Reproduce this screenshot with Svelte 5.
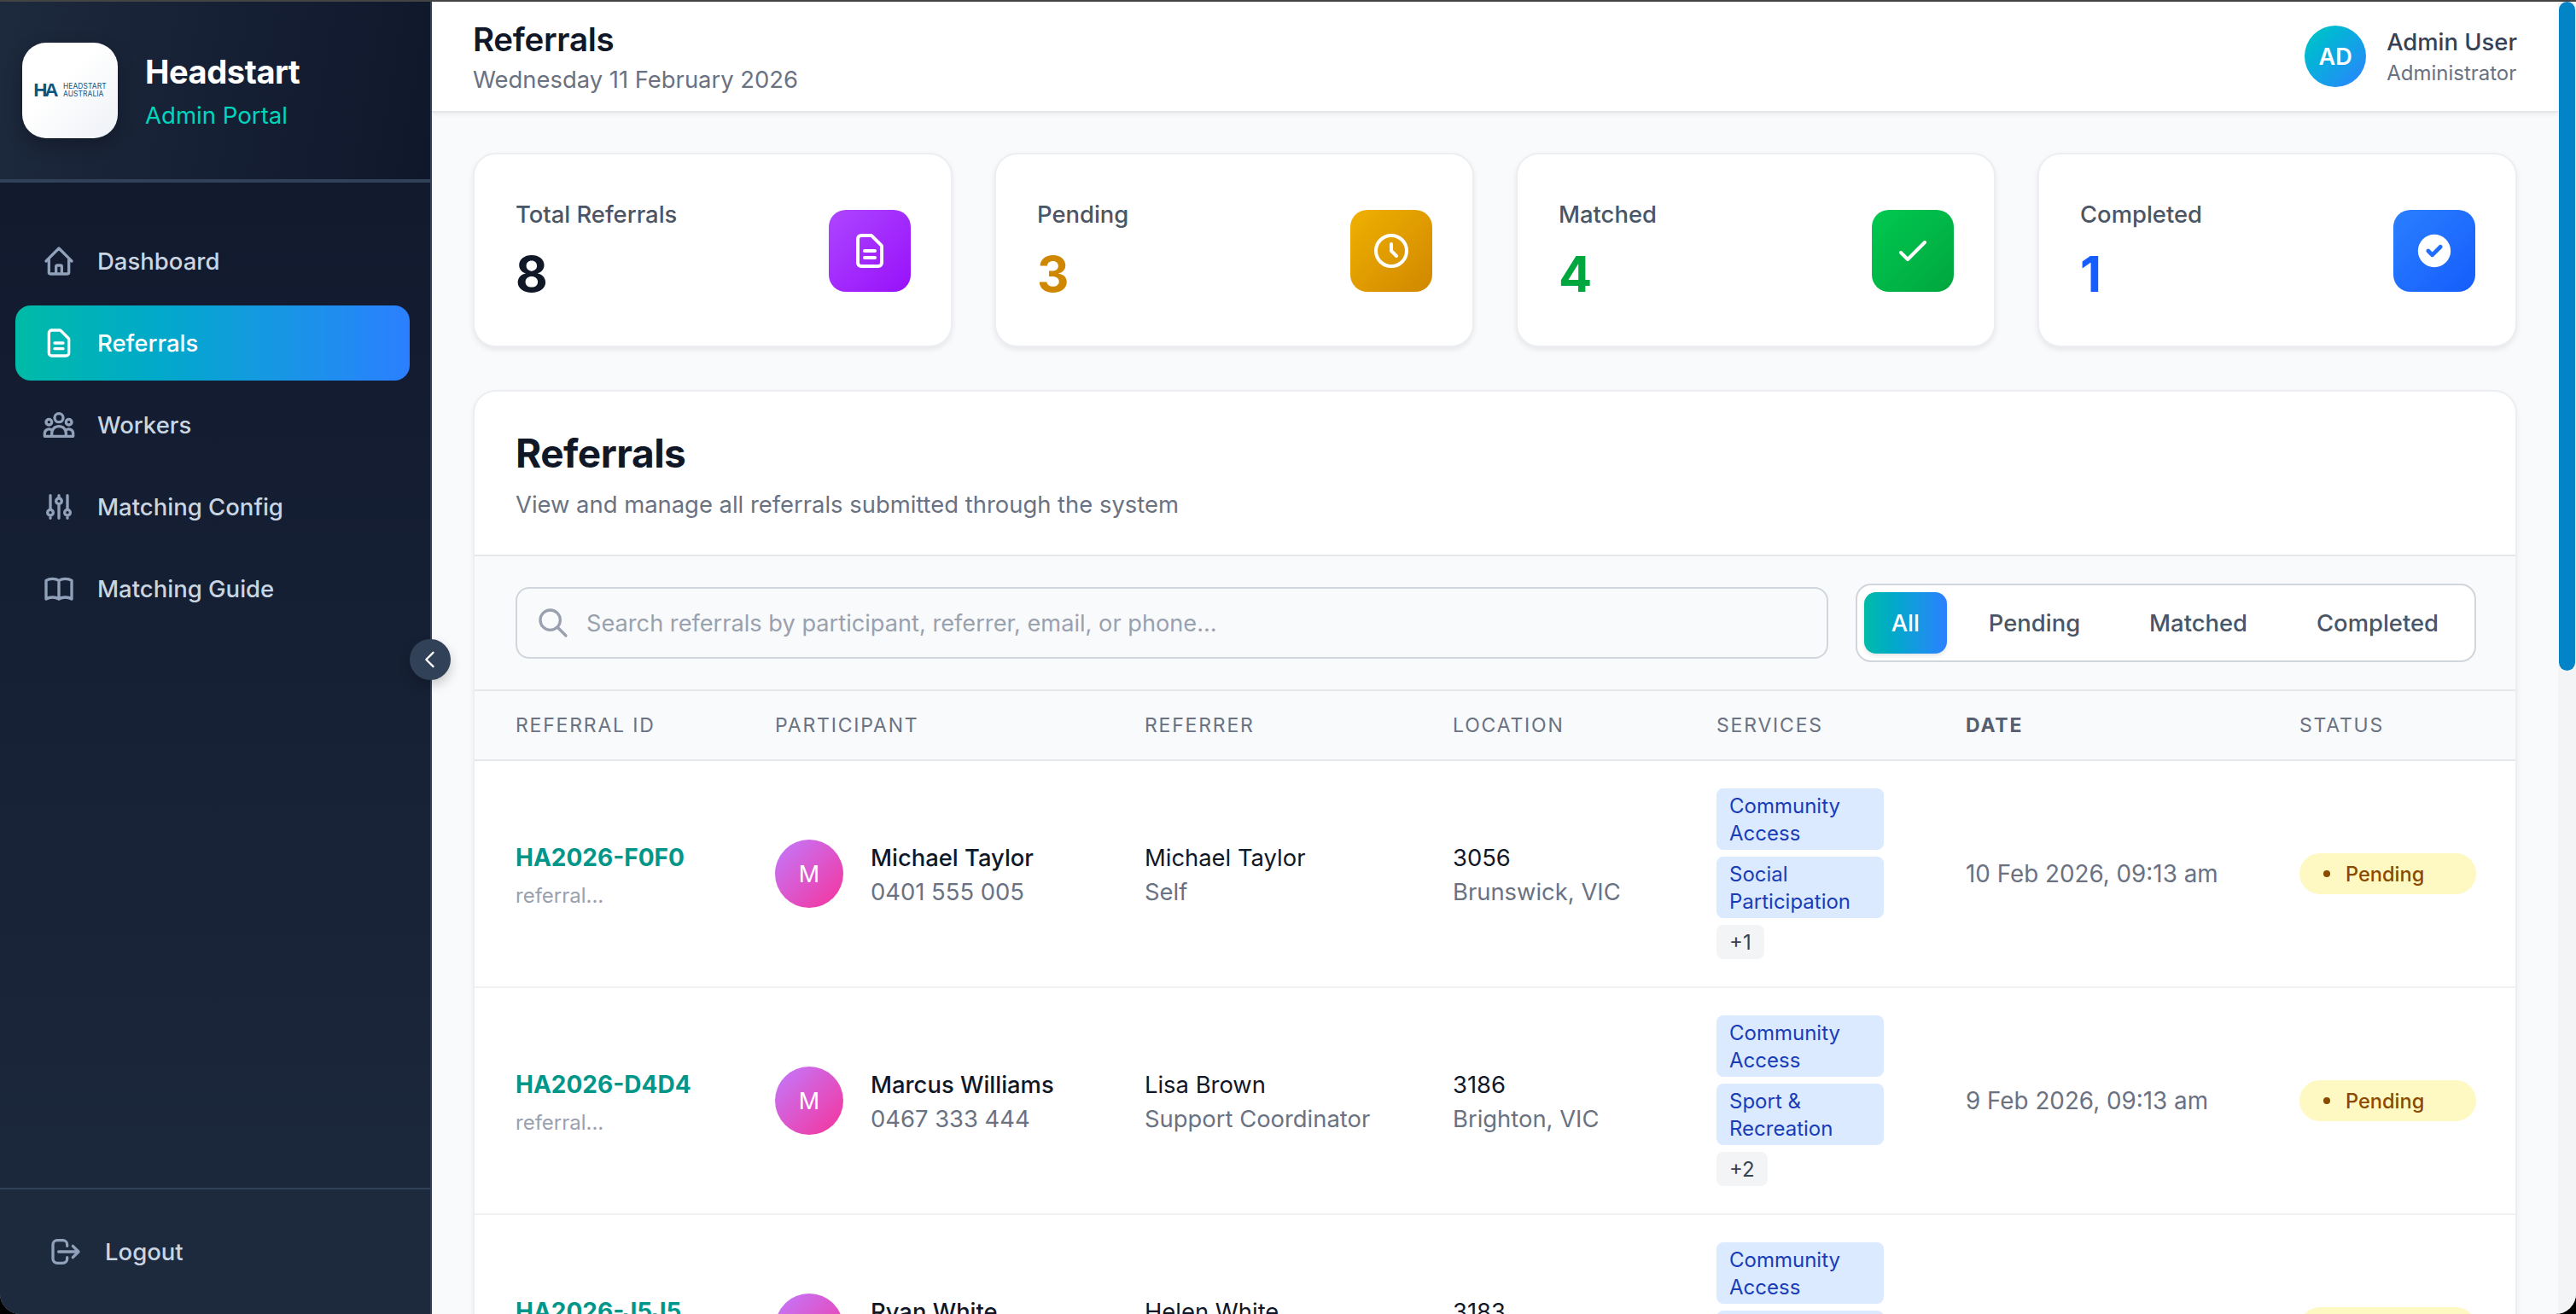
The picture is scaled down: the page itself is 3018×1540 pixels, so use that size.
<script lang="ts">
	interface Referral {
		id: string;
		name: string;
		phone: string;
		referrer: string;
		relation: string;
		postcode: string;
		suburb: string;
		services: string[];
		extra: number;
		date: string;
	}

	const icons: Record<string, string> = {
		home: 'M3 12l2-2m0 0l7-7 7 7M5 10v10a1 1 0 001 1h3m10-11l2 2m-2-2v10a1 1 0 01-1 1h-3m-6 0a1 1 0 001-1v-4a1 1 0 011-1h2a1 1 0 011 1v4a1 1 0 001 1m-6 0h6',
		doc: 'M9 12h6m-6 4h6m2 5H7a2 2 0 01-2-2V5a2 2 0 012-2h5.586a1 1 0 01.707.293l5.414 5.414a1 1 0 01.293.707V19a2 2 0 01-2 2z',
		group: 'M17 20h5v-2a3 3 0 00-5.356-1.857M17 20H7m10 0v-2c0-.656-.126-1.283-.356-1.857M7 20H2v-2a3 3 0 015.356-1.857M7 20v-2c0-.656.126-1.283.356-1.857m0 0a5.002 5.002 0 019.288 0M15 7a3 3 0 11-6 0 3 3 0 016 0zm6 3a2 2 0 11-4 0 2 2 0 014 0zM7 10a2 2 0 11-4 0 2 2 0 014 0z',
		sliders: 'M12 6V4m0 2a2 2 0 100 4m0-4a2 2 0 110 4m-6 8a2 2 0 100-4m0 4a2 2 0 110-4m0 4v2m0-6V4m6 6v10m6-2a2 2 0 100-4m0 4a2 2 0 110-4m0 4v2m0-6V4',
		book: 'M12 6.253v13m0-13C10.832 5.477 9.246 5 7.5 5S4.168 5.477 3 6.253v13C4.168 18.477 5.754 18 7.5 18s3.332.477 4.5 1.253m0-13C13.168 5.477 14.754 5 16.5 5c1.747 0 3.332.477 4.5 1.253v13C19.832 18.477 18.247 18 16.5 18c-1.746 0-3.332.477-4.5 1.253',
		logout: 'M17 16l4-4m0 0l-4-4m4 4H7m6 4v1a3 3 0 01-3 3H6a3 3 0 01-3-3V7a3 3 0 013-3h4a3 3 0 013 3v1',
		clock: 'M12 8v4l3 3m6-3a9 9 0 11-18 0 9 9 0 0118 0z',
		check: 'M5 13l4 4L19 7'
	};

	const navItems = [
		{ label: 'Dashboard', icon: 'home' },
		{ label: 'Referrals', icon: 'doc', active: true },
		{ label: 'Workers', icon: 'group' },
		{ label: 'Matching Config', icon: 'sliders' },
		{ label: 'Matching Guide', icon: 'book' }
	];

	const stats = [
		{ label: 'Total Referrals', value: 8, tone: 'purple', icon: 'doc' },
		{ label: 'Pending', value: 3, tone: 'yellow', icon: 'clock' },
		{ label: 'Matched', value: 4, tone: 'green', icon: 'check' },
		{ label: 'Completed', value: 1, tone: 'blue', icon: '' }
	];

	const filters = ['All', 'Pending', 'Matched', 'Completed'];
	const columns = ['Referral ID', 'Participant', 'Referrer', 'Location', 'Services', 'Date', 'Status'];

	const referrals: Referral[] = [
		{
			id: 'HA2026-F0F0',
			name: 'Michael Taylor',
			phone: '0401 555 005',
			referrer: 'Michael Taylor',
			relation: 'Self',
			postcode: '3056',
			suburb: 'Brunswick, VIC',
			services: ['Community Access', 'Social Participation'],
			extra: 1,
			date: '10 Feb 2026, 09:13 am'
		},
		{
			id: 'HA2026-D4D4',
			name: 'Marcus Williams',
			phone: '0467 333 444',
			referrer: 'Lisa Brown',
			relation: 'Support Coordinator',
			postcode: '3186',
			suburb: 'Brighton, VIC',
			services: ['Community Access', 'Sport & Recreation'],
			extra: 2,
			date: '9 Feb 2026, 09:13 am'
		},
		{
			id: 'HA2026-J5J5',
			name: 'Ryan White',
			phone: '0423 111 222',
			referrer: 'Helen White',
			relation: 'Family Member',
			postcode: '3183',
			suburb: 'Balaclava, VIC',
			services: ['Community Access', 'Social Participation'],
			extra: 1,
			date: '8 Feb 2026, 09:13 am'
		}
	];
</script>

<div class="app">
	<aside class="sidebar">
		<div class="brand">
			<div class="logo">
				<span class="logo-mark">HA</span>
				<span class="logo-text">HEADSTART<br />AUSTRALIA</span>
			</div>
			<div class="brand-text">
				<div class="brand-name">Headstart</div>
				<div class="brand-sub">Admin Portal</div>
			</div>
		</div>

		<nav class="nav">
			{#each navItems as item}
				<a class="nav-item" class:active={item.active} href="#top">
					<svg class="nav-icon" viewBox="0 0 24 24" fill="none" stroke="currentColor" stroke-width="2" stroke-linecap="round" stroke-linejoin="round">
						<path d={icons[item.icon]} />
					</svg>
					<span>{item.label}</span>
				</a>
			{/each}
		</nav>

		<div class="sidebar-footer">
			<a class="logout" href="#top">
				<svg class="nav-icon" viewBox="0 0 24 24" fill="none" stroke="currentColor" stroke-width="2" stroke-linecap="round" stroke-linejoin="round">
					<path d={icons.logout} />
				</svg>
				<span>Logout</span>
			</a>
		</div>

		<button class="collapse" aria-label="Collapse sidebar">
			<svg viewBox="0 0 24 24" fill="none" stroke="currentColor" stroke-width="2" stroke-linecap="round" stroke-linejoin="round">
				<path d="M15 19l-7-7 7-7" />
			</svg>
		</button>
	</aside>

	<div class="main">
		<header class="topbar">
			<div>
				<h1>Referrals</h1>
				<div class="today">Wednesday 11 February 2026</div>
			</div>
			<div class="user">
				<div class="user-avatar">AD</div>
				<div>
					<div class="user-name">Admin User</div>
					<div class="user-role">Administrator</div>
				</div>
			</div>
		</header>

		<div class="content">
			<section class="stats">
				{#each stats as stat}
					<div class="stat-card">
						<div class="stat-text">
							<div class="stat-label">{stat.label}</div>
							<div class="stat-value {stat.tone}">{stat.value}</div>
						</div>
						<div class="stat-icon {stat.tone}">
							{#if stat.icon}
								<svg viewBox="0 0 24 24" fill="none" stroke="currentColor" stroke-width="2" stroke-linecap="round" stroke-linejoin="round">
									<path d={icons[stat.icon]} />
								</svg>
							{:else}
								<svg viewBox="0 0 20 20" fill="currentColor">
									<path fill-rule="evenodd" clip-rule="evenodd" d="M10 18a8 8 0 100-16 8 8 0 000 16zm3.707-9.293a1 1 0 00-1.414-1.414L9 10.586 7.707 9.293a1 1 0 00-1.414 1.414l2 2a1 1 0 001.414 0l4-4z" />
								</svg>
							{/if}
						</div>
					</div>
				{/each}
			</section>

			<section class="panel">
				<div class="panel-header">
					<h2>Referrals</h2>
					<p>View and manage all referrals submitted through the system</p>
				</div>

				<div class="toolbar">
					<div class="search">
						<svg viewBox="0 0 24 24" fill="none" stroke="currentColor" stroke-width="2" stroke-linecap="round" stroke-linejoin="round">
							<path d="M21 21l-6-6m2-5a7 7 0 11-14 0 7 7 0 0114 0z" />
						</svg>
						<input type="text" placeholder="Search referrals by participant, referrer, email, or phone..." />
					</div>
					<div class="filters">
						{#each filters as filter, i}
							<button class="filter" class:selected={i === 0}>{filter}</button>
						{/each}
					</div>
				</div>

				<table>
					<colgroup>
						<col style="width: 304px" />
						<col style="width: 433px" />
						<col style="width: 361px" />
						<col style="width: 309px" />
						<col style="width: 292px" />
						<col style="width: 391px" />
						<col />
					</colgroup>
					<thead>
						<tr>
							{#each columns as col}
								<th class:sorted={col === 'Date'}>{col}</th>
							{/each}
						</tr>
					</thead>
					<tbody>
						{#each referrals as row}
							<tr>
								<td>
									<div class="ref-id">{row.id}</div>
									<div class="ref-sub">referral...</div>
								</td>
								<td>
									<div class="participant">
										<div class="avatar">{row.name[0]}</div>
										<div>
											<div class="primary strong">{row.name}</div>
											<div class="secondary">{row.phone}</div>
										</div>
									</div>
								</td>
								<td>
									<div class="primary">{row.referrer}</div>
									<div class="secondary">{row.relation}</div>
								</td>
								<td>
									<div class="primary">{row.postcode}</div>
									<div class="secondary">{row.suburb}</div>
								</td>
								<td>
									<div class="tags">
										{#each row.services as service}
											<span class="tag">{service}</span>
										{/each}
										<span class="tag more">+{row.extra}</span>
									</div>
								</td>
								<td class="date">{row.date}</td>
								<td>
									<div class="status"><i></i>Pending</div>
								</td>
							</tr>
						{/each}
					</tbody>
				</table>
			</section>
		</div>
	</div>

	<div class="scroll-track">
		<div class="scroll-thumb"></div>
	</div>
</div>

<style>
	:global(body) {
		margin: 0;
		background: #000;
		overflow: hidden;
	}

	.app {
		position: relative;
		display: flex;
		height: 1540px;
		box-sizing: border-box;
		border-top: 2px solid #444;
		border-radius: 0 0 24px 24px;
		overflow: hidden;
		background: #f9fafb;
		font-family: Inter, 'Liberation Sans', sans-serif;
		font-size: 27.4px;
		color: #101828;
	}

	/* sidebar */
	.sidebar {
		display: flex;
		flex-direction: column;
		flex: none;
		width: 506px;
		box-sizing: border-box;
		border-right: 2px solid #314158;
		background: linear-gradient(180deg, #0f172b, #1d293d);
	}

	.brand {
		display: flex;
		align-items: center;
		gap: 32px;
		height: 212px;
		box-sizing: border-box;
		padding: 0 26px;
		border-bottom: 4px solid #314158;
		background: linear-gradient(100deg, #1d293d, #0f172b);
	}

	.logo {
		display: flex;
		align-items: center;
		justify-content: center;
		gap: 6px;
		flex: none;
		width: 112px;
		height: 112px;
		border-radius: 28px;
		background: linear-gradient(135deg, #fff 40%, #eef1f6);
		color: #0d5480;
		box-shadow: 0 8px 20px rgba(0, 0, 0, 0.25);
	}

	.logo-mark {
		font-family: 'Liberation Sans', sans-serif;
		font-size: 22.5px;
		font-weight: 700;
		line-height: 16px;
		letter-spacing: -3.4px;
		margin-right: 3px;
	}

	.logo-text {
		font-size: 8.4px;
		line-height: 9px;
		letter-spacing: 0.1px;
	}

	.brand-text {
		padding-top: 2px;
	}

	.brand-name {
		font-size: 38px;
		font-weight: 700;
		line-height: 46px;
		letter-spacing: -0.4px;
		color: #fff;
	}

	.brand-sub {
		margin-top: 10px;
		font-size: 27.6px;
		line-height: 36px;
		color: #00d5be;
	}

	.nav {
		display: flex;
		flex-direction: column;
		gap: 8px;
		flex: 1;
		padding: 48px 24px 0 18px;
	}

	.nav-item,
	.logout {
		display: flex;
		align-items: center;
		gap: 25px;
		font-size: 27.5px;
		font-weight: 500;
		color: #cad5e2;
		text-decoration: none;
	}

	.nav-item {
		height: 88px;
		padding-left: 31px;
		border-radius: 18px;
	}

	.nav-item.active {
		background: linear-gradient(90deg in oklab, #00bba7, #2b7fff);
		color: #fff;
	}

	.nav-icon {
		flex: none;
		width: 40px;
		height: 40px;
		color: #90a1b9;
	}

	.active .nav-icon {
		color: #fff;
	}

	.sidebar-footer {
		height: 148px;
		box-sizing: border-box;
		padding: 28px 0 0 57px;
		border-top: 2px solid #314158;
		background: #1d293d;
	}

	.logout {
		height: 90px;
		gap: 26px;
	}

	.collapse {
		position: absolute;
		left: 480px;
		top: 747px;
		display: flex;
		align-items: center;
		justify-content: center;
		width: 48px;
		height: 48px;
		padding: 0;
		border: none;
		border-radius: 50%;
		background: #314158;
		color: #fff;
		box-shadow: 0 6px 14px rgba(0, 0, 0, 0.2);
	}

	.collapse svg {
		width: 28px;
		height: 28px;
	}

	/* main column */
	.main {
		flex: 1;
		min-width: 0;
		overflow: hidden;
	}

	.topbar {
		display: flex;
		align-items: center;
		justify-content: space-between;
		height: 130px;
		box-sizing: border-box;
		padding: 0 48px;
		background: #fff;
		border-bottom: 2px solid #e5e7eb;
		box-shadow: 0 2px 5px rgba(0, 0, 0, 0.06);
	}

	h1 {
		margin: 0;
		font-size: 38.5px;
		font-weight: 600;
		line-height: 50px;
		letter-spacing: -0.3px;
		color: #101828;
	}

	.today {
		margin-top: 4px;
		font-size: 27.4px;
		line-height: 36px;
		color: #6a7282;
	}

	.user {
		display: flex;
		align-items: center;
		gap: 24px;
	}

	.user-avatar {
		display: flex;
		align-items: center;
		justify-content: center;
		width: 72px;
		height: 72px;
		border-radius: 50%;
		background: linear-gradient(135deg in oklab, #00c9c0, #2b7fff);
		font-size: 27px;
		font-weight: 600;
		color: #fff;
	}

	.user-name {
		font-size: 27.4px;
		font-weight: 500;
		line-height: 36px;
		color: #364153;
	}

	.user-role {
		margin-top: 3px;
		font-size: 24px;
		line-height: 32px;
		color: #6a7282;
	}

	.content {
		padding: 47px 48px 0 48px;
	}

	/* stat cards */
	.stats {
		display: grid;
		grid-template-columns: repeat(4, 1fr);
		gap: 49px;
	}

	.stat-card {
		display: flex;
		align-items: center;
		justify-content: space-between;
		box-sizing: border-box;
		height: 228px;
		padding: 0 47px 0 48px;
		background: #fff;
		border: 2px solid #eceef1;
		border-radius: 27px;
		box-shadow: 0 3px 6px rgba(0, 0, 0, 0.08);
	}

	.stat-text {
		padding-top: 2px;
	}

	.stat-label {
		font-size: 27.4px;
		font-weight: 500;
		line-height: 40px;
		color: #4a5565;
	}

	.stat-value {
		margin-top: 14px;
		font-size: 58px;
		font-weight: 700;
		line-height: 72px;
	}

	.stat-value.purple {
		color: #101828;
	}

	.stat-value.yellow {
		color: #d08700;
	}

	.stat-value.green {
		color: #00a63e;
	}

	.stat-value.blue {
		color: #155dfc;
	}

	.stat-icon {
		display: flex;
		align-items: center;
		justify-content: center;
		width: 96px;
		height: 96px;
		margin-top: 2px;
		border-radius: 20px;
		color: #fff;
	}

	.stat-icon svg {
		width: 48px;
		height: 48px;
	}

	.stat-icon.purple {
		background: linear-gradient(135deg, #ad46ff, #9810fa);
	}

	.stat-icon.yellow {
		background: linear-gradient(135deg, #f0b100, #d08700);
	}

	.stat-icon.green {
		background: linear-gradient(135deg, #00c950, #00a63e);
	}

	.stat-icon.blue {
		background: linear-gradient(135deg, #2b7fff, #155dfc);
	}

	/* referrals panel */
	.panel {
		margin-top: 50px;
		background: #fff;
		border: 2px solid #eceef1;
		border-radius: 27px;
		box-shadow: 0 3px 6px rgba(0, 0, 0, 0.06);
		overflow: hidden;
	}

	.panel-header {
		padding: 43px 48px 39px;
		border-bottom: 2px solid #e5e7eb;
	}

	h2 {
		margin: 0;
		font-size: 46px;
		font-weight: 700;
		line-height: 58px;
		letter-spacing: -0.5px;
		color: #101828;
	}

	.panel-header p {
		margin: 11px 0 0;
		font-size: 27.4px;
		line-height: 40px;
		color: #6a7282;
	}

	.toolbar {
		display: flex;
		align-items: center;
		gap: 32px;
		padding: 32px 46px 32px 48px;
		background: #f9fafb;
		border-bottom: 2px solid #e5e7eb;
	}

	.search {
		position: relative;
		flex: 1;
	}

	.search svg {
		position: absolute;
		left: 24px;
		top: 22px;
		width: 40px;
		height: 40px;
		color: #99a1af;
	}

	.search input {
		display: block;
		width: 100%;
		height: 84px;
		box-sizing: border-box;
		padding: 0 24px 0 81px;
		border: 2px solid #d1d5dc;
		border-radius: 16px;
		background: #f9fafb;
		font-family: inherit;
		font-size: 27.2px;
		color: #101828;
	}

	.search input::placeholder {
		color: #99a1af;
	}

	.filters {
		display: flex;
		gap: 17px;
		flex: none;
		box-sizing: border-box;
		height: 92px;
		padding: 8px 10px 8px 8px;
		border: 2px solid #d1d5dc;
		border-radius: 18px;
		background: #fff;
	}

	.filter {
		height: 72px;
		padding: 0 32px;
		border: none;
		border-radius: 14px;
		background: none;
		font-family: inherit;
		font-size: 27.4px;
		font-weight: 500;
		color: #4a5565;
	}

	.filter.selected {
		background: linear-gradient(90deg in oklab, #00bba7, #2b7fff);
		color: #fff;
		box-shadow: 0 2px 5px rgba(0, 0, 0, 0.12);
	}

	table {
		width: 100%;
		table-layout: fixed;
		border-collapse: separate;
		border-spacing: 0;
	}

	th {
		height: 80px;
		box-sizing: content-box;
		padding: 0 48px;
		background: #f9fafb;
		border-bottom: 2px solid #e5e7eb;
		font-size: 23px;
		font-weight: 400;
		letter-spacing: 1.8px;
		text-align: left;
		text-transform: uppercase;
		color: #6a7282;
	}

	th.sorted {
		font-weight: 700;
		color: #565f70;
	}

	td {
		padding: 32px 0 32px 48px;
		border-bottom: 2px solid #f0f1f3;
		vertical-align: middle;
	}

	td:last-child {
		padding-right: 46px;
	}

	.ref-id {
		padding-top: 2px;
		font-size: 28px;
		font-weight: 700;
		line-height: 40px;
		color: #009689;
	}

	.ref-sub {
		margin-top: 10px;
		font-size: 24px;
		line-height: 30px;
		color: #99a1af;
	}

	.participant {
		display: flex;
		align-items: center;
		gap: 32px;
	}

	.avatar {
		display: flex;
		align-items: center;
		justify-content: center;
		flex: none;
		width: 80px;
		height: 80px;
		border-radius: 50%;
		background: linear-gradient(135deg, #c27aff, #f6339a);
		font-size: 27px;
		font-weight: 400;
		color: #fff;
	}

	.primary {
		padding-top: 3px;
		font-size: 27.4px;
		font-weight: 400;
		line-height: 40px;
		white-space: nowrap;
		color: #101828;
	}

	.primary.strong {
		font-weight: 500;
	}

	.secondary {
		font-size: 27.4px;
		line-height: 41px;
		white-space: nowrap;
		color: #6a7282;
	}

	.tags {
		display: flex;
		flex-direction: column;
		align-items: flex-start;
		gap: 8px;
		width: 196px;
	}

	.tag {
		box-sizing: border-box;
		width: 100%;
		padding: 5px 15px 3px;
		border-radius: 8px;
		background: #dbeafe;
		font-size: 24px;
		font-weight: 400;
		line-height: 32px;
		color: #193cb8;
	}

	.tag.more {
		width: auto;
		background: #f3f4f6;
		color: #364153;
	}

	.date {
		font-size: 27.8px;
		color: #6a7282;
	}

	.status {
		display: flex;
		align-items: center;
		gap: 18px;
		height: 48px;
		padding-left: 28px;
		border-radius: 24px;
		background: #fef9c2;
		font-size: 23.6px;
		font-weight: 500;
		color: #894b00;
	}

	.status i {
		width: 8px;
		height: 8px;
		border-radius: 50%;
		background: #894b00;
	}

	/* scrollbar */
	.scroll-track {
		flex: none;
		width: 21px;
		background: #f3f4f6;
	}

	.scroll-thumb {
		width: 19px;
		height: 784px;
		margin-left: 1px;
		border-radius: 10px;
		background: #0284c7;
	}
</style>
